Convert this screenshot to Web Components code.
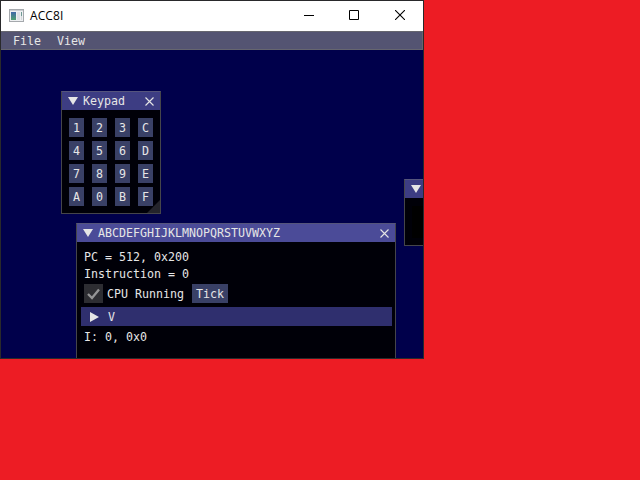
<!DOCTYPE html>
<html lang="en"><head><meta charset="utf-8"><title>ACC8I</title>
<style>html,body{margin:0;width:640px;height:480px;overflow:hidden;background:#ed1c24}</style></head>
<body>
<app-window caption="ACC8I">
  <menu-bar slot="menu"><span>File</span><span>View</span></menu-bar>
  <tool-window caption="Keypad" closable resizable style="--x:60px;--y:41px;--w:100px;--h:123px"><key-pad></key-pad></tool-window>
  <tool-window style="--x:403px;--y:129px;--w:120px;--h:67px"><screen-view></screen-view></tool-window>
  <tool-window caption="ABCDEFGHIJKLMNOPQRSTUVWXYZ" closable style="--x:75px;--y:173px;--w:320px;--h:200px;--title:#4b4b98"><cpu-panel></cpu-panel></tool-window>
</app-window>
<script>
const define = (name, render) => customElements.define(name, class extends HTMLElement {
  connectedCallback() {
    if (!this.shadowRoot) this.attachShadow({mode: 'open'}).innerHTML = '<style>*{box-sizing:border-box}</style>' + render(this);
  }
});
const svg = (w, h, body) => `<svg width="${w}" height="${h}" viewBox="0 0 ${w} ${h}">${body}</svg>`;

define('app-window', el => `<style>
:host{display:flex;flex-direction:column;box-sizing:border-box;width:424px;height:359px;border:1px solid #29292b;overflow:hidden;background:#00004b;
 font:11.63px/13px "DejaVu Sans Mono",monospace;color:#e6e6e6;white-space:nowrap}
header{height:30px;flex:none;background:#fff;color:#000;display:flex;align-items:center;padding:0 0 2px 8px;font:12px/16px "Open Sans","Noto Sans",sans-serif}
header b{font-weight:400;flex:1;margin-left:6px;padding-top:1px;letter-spacing:.1px}
.btn{width:45px;display:flex;justify-content:center}
.btn:nth-of-type(3){width:47px}
svg{display:block}
main{position:relative;flex:1;overflow:hidden}
</style>
<header>${svg(15,13,'<defs><linearGradient id="g" x2="0" y2="1"><stop stop-color="#4068a8"/><stop offset="1" stop-color="#4fa070"/></linearGradient></defs><rect x=".5" y=".5" width="14" height="12" fill="#eef0f2" stroke="#a5a9ad"/><path d="M1 1.5h13" stroke="#c9cdd1"/><rect x="2" y="3" width="5" height="8" fill="url(#g)"/><path d="M8 3h3v8H8z" fill="#dde0e4"/><path d="M12 3h1v4h-1z" fill="#6f9a94"/><path d="M12 7h1v4h-1z" fill="#d3d7da"/>')}<b>${el.getAttribute('caption')}</b>
<span class="btn">${svg(10,10,'<path d="M0 5.5h10" stroke="#000"/>')}</span><span class="btn">${svg(10,10,'<path d="M.5.5h9v9h-9z" fill="none" stroke="#000"/>')}</span><span class="btn">${svg(10,10,'<path d="M0 0l10 10M10 0L0 10" stroke="#000" stroke-width="1.1"/>')}</span></header>
<slot name="menu"></slot><main><slot></slot></main>`);

define('menu-bar', () => `<style>
:host{display:flex;box-sizing:border-box;flex:none;height:19px;padding:3px 12px;gap:16px;background:#545472;border:1px solid #66666f;border-left:0}
</style><slot></slot>`);

define('tool-window', el => `<style>
:host{position:absolute;box-sizing:border-box;left:var(--x);top:var(--y);width:var(--w);height:var(--h);background:#000008;border:1px solid #45454a;border-top-color:#55557c;overflow:hidden}
header{display:flex;align-items:center;height:18px;background:var(--title,#3d3d83);padding:0 6px}
header span{flex:1;margin-left:5px;padding-top:1px}
svg{display:block}
.grip{position:absolute;right:0;bottom:0}
</style>
<header>${svg(10,8,'<path d="M0 0h10L5 8z" fill="#e6e6e6"/>')}<span>${el.getAttribute('caption') || ''}</span>${el.hasAttribute('closable') ? svg(9,9,'<path d="M.5.5l8 8M8.5.5l-8 8" stroke="#e6e6e6" stroke-width="1.1"/>') : ''}</header>
<slot></slot>${el.hasAttribute('resizable') ? `<div class="grip">${svg(13,13,'<path d="M13 0v13H0z" fill="#24242b"/>')}</div>` : ''}`);

define('ui-button', () => `<style>
:host{display:flex;box-sizing:border-box;height:19px;padding:4px 4px 2px;background:#394066}
</style><slot></slot>`);

define('key-pad', () => `<style>
:host{display:grid;grid-template-columns:repeat(4,15px);gap:4px 8px;padding:8px 7px}
</style>${[...'123C456D789EA0BF'].map(k => `<ui-button>${k}</ui-button>`).join('')}`);

define('screen-view', () => `<style>
:host{display:block;height:32px;margin:8px 7px;background:#000}
</style>`);

define('cpu-panel', () => `<style>
:host{display:flex;flex-direction:column;gap:4px;padding:9px 7px}
.row{display:flex;gap:4px;align-items:center;margin-top:-1px}
.row span{margin-right:4px;padding-top:2px}
.check{width:19px;height:19px;background:#2d2d32;padding:3px}
.bar{display:flex;align-items:center;height:19px;margin:0 -4px 0 -3px;padding-left:9px;gap:9px;background:#2f2f6e}
.bar span{padding-top:2px}
svg{display:block}
</style>
<div>PC = 512, 0x200</div><div>Instruction = 0</div>
<div class="row"><div class="check">${svg(13,13,'<path d="M1 7l4 4 7-8.5" fill="none" stroke="#949496" stroke-width="2.3"/>')}</div><span>CPU Running</span><ui-button>Tick</ui-button></div>
<div class="bar">${svg(9,10,'<path d="M0 0l9 5-9 5z" fill="#e6e6e6"/>')}<span>V</span></div>
<div style="padding-top:1px">I: 0, 0x0</div>`);
</script>
</body></html>
